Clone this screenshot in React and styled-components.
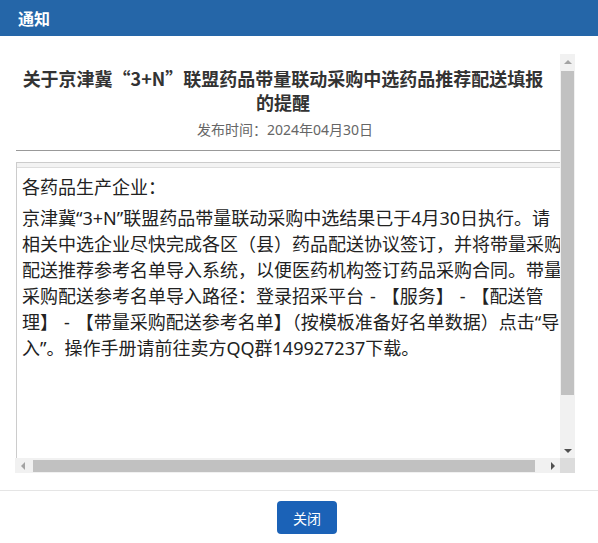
import styled, { createGlobalStyle, css } from 'styled-components'

const GlobalStyle = createGlobalStyle`
  html, body {
    margin: 0;
    padding: 0;
    background: #fff;
    font-family: "Noto Sans", "Noto Sans CJK SC", sans-serif;
  }
`

const Page = styled.div`
  width: 598px;
  height: 543px;
  display: flex;
  flex-direction: column;
  background: #fff;
`

const Header = styled.div`
  height: 36px;
  background: #2566a8;
  display: flex;
  align-items: center;
  padding-left: 18px;
`

const HeaderTitle = styled.h2`
  margin: 0;
  color: #fff;
  font-size: 16px;
  font-weight: 700;
  font-family: "Noto Sans CJK SC", sans-serif;
`

const Body = styled.div`
  padding: 18px 23px 17px 15px;
`

// viewport + scrollbars, laid out like a classic scroll box
const ScrollFrame = styled.div`
  display: grid;
  grid-template-columns: 545px 15px;
  grid-template-rows: 404px 15px;
  width: 560px;
  height: 419px;
`

const Viewport = styled.div`
  overflow: hidden;
`

const Doc = styled.div`
  width: 567px;
  padding: 12px 0 8px 0;
  box-sizing: border-box;
`

const Title = styled.h3`
  width: 536px;
  margin: 0;
  text-align: center;
  font-size: 18px;
  line-height: 24px;
  font-weight: 700;
  color: #333;
  font-family: "Noto Sans CJK SC", sans-serif;
`

const PubDate = styled.div`
  width: 540px;
  margin-top: 6px;
  text-align: center;
  font-size: 14px;
  line-height: 20px;
  color: #666;
`

const Rule = styled.div`
  height: 1px;
  margin: 10px 0 0 1px;
  background: #999;
`

const Box = styled.div`
  width: 554px;
  min-height: 362px;
  margin: 11px 0 0 1px;
  border: 1px solid #ccc;
  box-sizing: border-box;
`

const Strip = styled.div`
  height: 4px;
  background: #f3f3f3;
  border-bottom: 1px solid #ddd;
`

const Content = styled.div`
  padding: 6px 5px;
`

const Para = styled.p`
  margin: 0 0 5px;
  font-size: 18px;
  line-height: 26px;
  color: #222;
`

const Dash = styled.span`
  padding: 0 6px;
`

const Bar = styled.div`
  display: flex;
  flex-direction: ${p => (p.$vertical ? 'column' : 'row')};
  background: #f1f1f1;
`

const ArrowBtn = styled.div`
  flex: 0 0 15px;
  display: flex;
  align-items: center;
  justify-content: center;
`

const arrowShapes = {
  up: css`
    border-left: 4px solid transparent;
    border-right: 4px solid transparent;
    border-bottom: 4px solid ${p => p.$color};
  `,
  down: css`
    border-left: 4px solid transparent;
    border-right: 4px solid transparent;
    border-top: 4px solid ${p => p.$color};
  `,
  left: css`
    border-top: 4px solid transparent;
    border-bottom: 4px solid transparent;
    border-right: 4px solid ${p => p.$color};
  `,
  right: css`
    border-top: 4px solid transparent;
    border-bottom: 4px solid transparent;
    border-left: 4px solid ${p => p.$color};
  `,
}

const Arrow = styled.span`
  width: 0;
  height: 0;
  ${p => arrowShapes[p.$dir]}
`

const Track = styled.div`
  flex: 1;
  display: flex;
  flex-direction: ${p => (p.$vertical ? 'column' : 'row')};
  padding: ${p => (p.$vertical ? '2px 1px 0' : '2px 0 1px 3px')};
`

const Thumb = styled.div`
  background: #c1c1c1;
  flex: none;
`

const Corner = styled.div`
  background: #dcdcdc;
`

const Footer = styled.div`
  border-top: 1px solid #e5e5e5;
  padding: 10px 0 0 16px;
  display: flex;
  justify-content: center;
`

const CloseButton = styled.button`
  width: 60px;
  height: 33px;
  border: none;
  border-radius: 4px;
  background: #1b62b7;
  color: #fff;
  font-size: 14px;
  font-family: "Noto Sans CJK SC", sans-serif;
  cursor: pointer;
`

const App = () => {
  return (
    <>
      <GlobalStyle />
      <Page>
        <Header>
          <HeaderTitle>通知</HeaderTitle>
        </Header>
        <Body>
          <ScrollFrame>
            <Viewport>
              <Doc>
                <Title>关于京津冀“3+N”联盟药品带量联动采购中选药品推荐配送填报的提醒</Title>
                <PubDate>发布时间：2024年04月30日</PubDate>
                <Rule />
                <Box>
                  <Strip />
                  <Content>
                    <Para>各药品生产企业：</Para>
                    <Para>
                      京津冀“3+N”联盟药品带量联动采购中选结果已于4月30日执行。请相关中选企业尽快完成各区（县）药品配送协议签订，并将带量采购配送推荐参考名单导入系统，以便医药机构签订药品采购合同。带量采购配送参考名单导入路径：登录招采平台<Dash>-</Dash>【服务】<Dash>-</Dash>【配送管理】<Dash>-</Dash>【带量采购配送参考名单】（按模板准备好名单数据）点击“导入”。操作手册请前往卖方QQ群149927237下载。
                    </Para>
                  </Content>
                </Box>
              </Doc>
            </Viewport>
            <Bar $vertical>
              <ArrowBtn>
                <Arrow $dir="up" $color="#a3a3a3" />
              </ArrowBtn>
              <Track $vertical>
                <Thumb style={{ height: 324 }} />
              </Track>
              <ArrowBtn>
                <Arrow $dir="down" $color="#505050" />
              </ArrowBtn>
            </Bar>
            <Bar>
              <ArrowBtn>
                <Arrow $dir="left" $color="#a3a3a3" />
              </ArrowBtn>
              <Track>
                <Thumb style={{ width: 502 }} />
              </Track>
              <ArrowBtn>
                <Arrow $dir="right" $color="#505050" />
              </ArrowBtn>
            </Bar>
            <Corner />
          </ScrollFrame>
        </Body>
        <Footer>
          <CloseButton>关闭</CloseButton>
        </Footer>
      </Page>
    </>
  )
}

export default App
